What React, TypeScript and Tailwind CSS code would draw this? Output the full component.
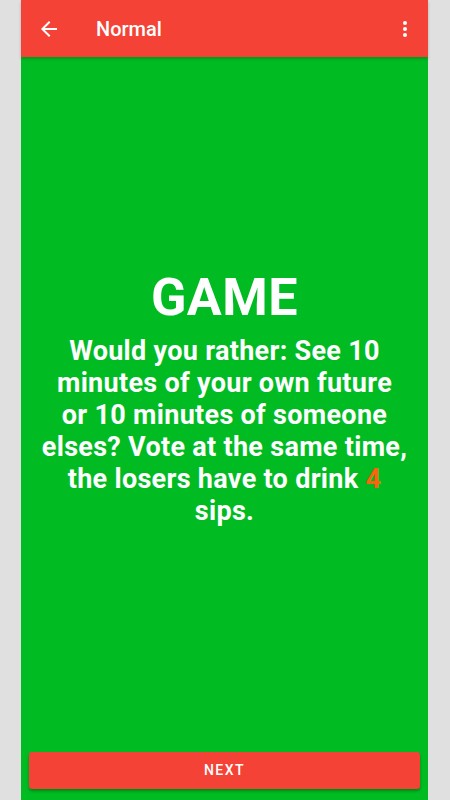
import React from "react";

export default function App() {
  const lines = [
    "Would you rather: See 10",
    "minutes of your own future",
    "or 10 minutes of someone",
    "elses? Vote at the same time,",
  ];
  return (
    <div className="w-[450px] h-[800px] bg-[#e0e0e0] flex justify-center pl-[21px] pr-[22px]" style={{ fontFamily: "Roboto, 'Noto Sans', sans-serif" }}>
      <div className="flex-1 h-full bg-[#00bc22] flex flex-col">
        <div className="h-[57px] bg-[#f44336] flex items-center shadow-[0_2px_3px_rgba(0,0,0,0.2)] relative z-10">
          <div className="w-[75px] flex items-center pl-[16px]">
            <svg width="24" height="24" viewBox="0 0 24 24" fill="none">
              <path d="M20 11H7.83l5.59-5.59L12 4l-8 8 8 8 1.41-1.41L7.83 13H20v-2z" fill="#ffffff" />
            </svg>
          </div>
          <div className="flex-1 text-white text-[20px] font-medium">Normal</div>
          <div className="flex justify-center pr-[11px]">
            <svg width="24" height="24" viewBox="0 0 24 24">
              <circle cx="12" cy="6" r="2" fill="#fff" />
              <circle cx="12" cy="12" r="2" fill="#fff" />
              <circle cx="12" cy="18" r="2" fill="#fff" />
            </svg>
          </div>
        </div>
        <div className="flex-1 flex flex-col items-center justify-center px-[10px] text-white text-center pb-[14px]">
          <div className="text-[52px] font-bold leading-[58px] tracking-[0.5px]">GAME</div>
          <div className="text-[27px] font-bold leading-[32px] mt-[8px] tracking-[0.3px] flex flex-col items-center">
            {lines.map((l) => (
              <span key={l} className="whitespace-nowrap">{l}</span>
            ))}
            <span className="whitespace-nowrap">
              the losers have to drink <span className="text-[#f7650f]">4</span>
            </span>
            <span className="whitespace-nowrap">sips.</span>
          </div>
        </div>
        <div className="px-[8px] pb-[11px]">
          <div className="h-[37px] bg-[#f44336] rounded-[3px] shadow-[0_2px_3px_rgba(0,0,0,0.3)] flex items-center justify-center text-white text-[14px] font-medium tracking-[1.5px]">
            NEXT
          </div>
        </div>
      </div>
    </div>
  );
}
